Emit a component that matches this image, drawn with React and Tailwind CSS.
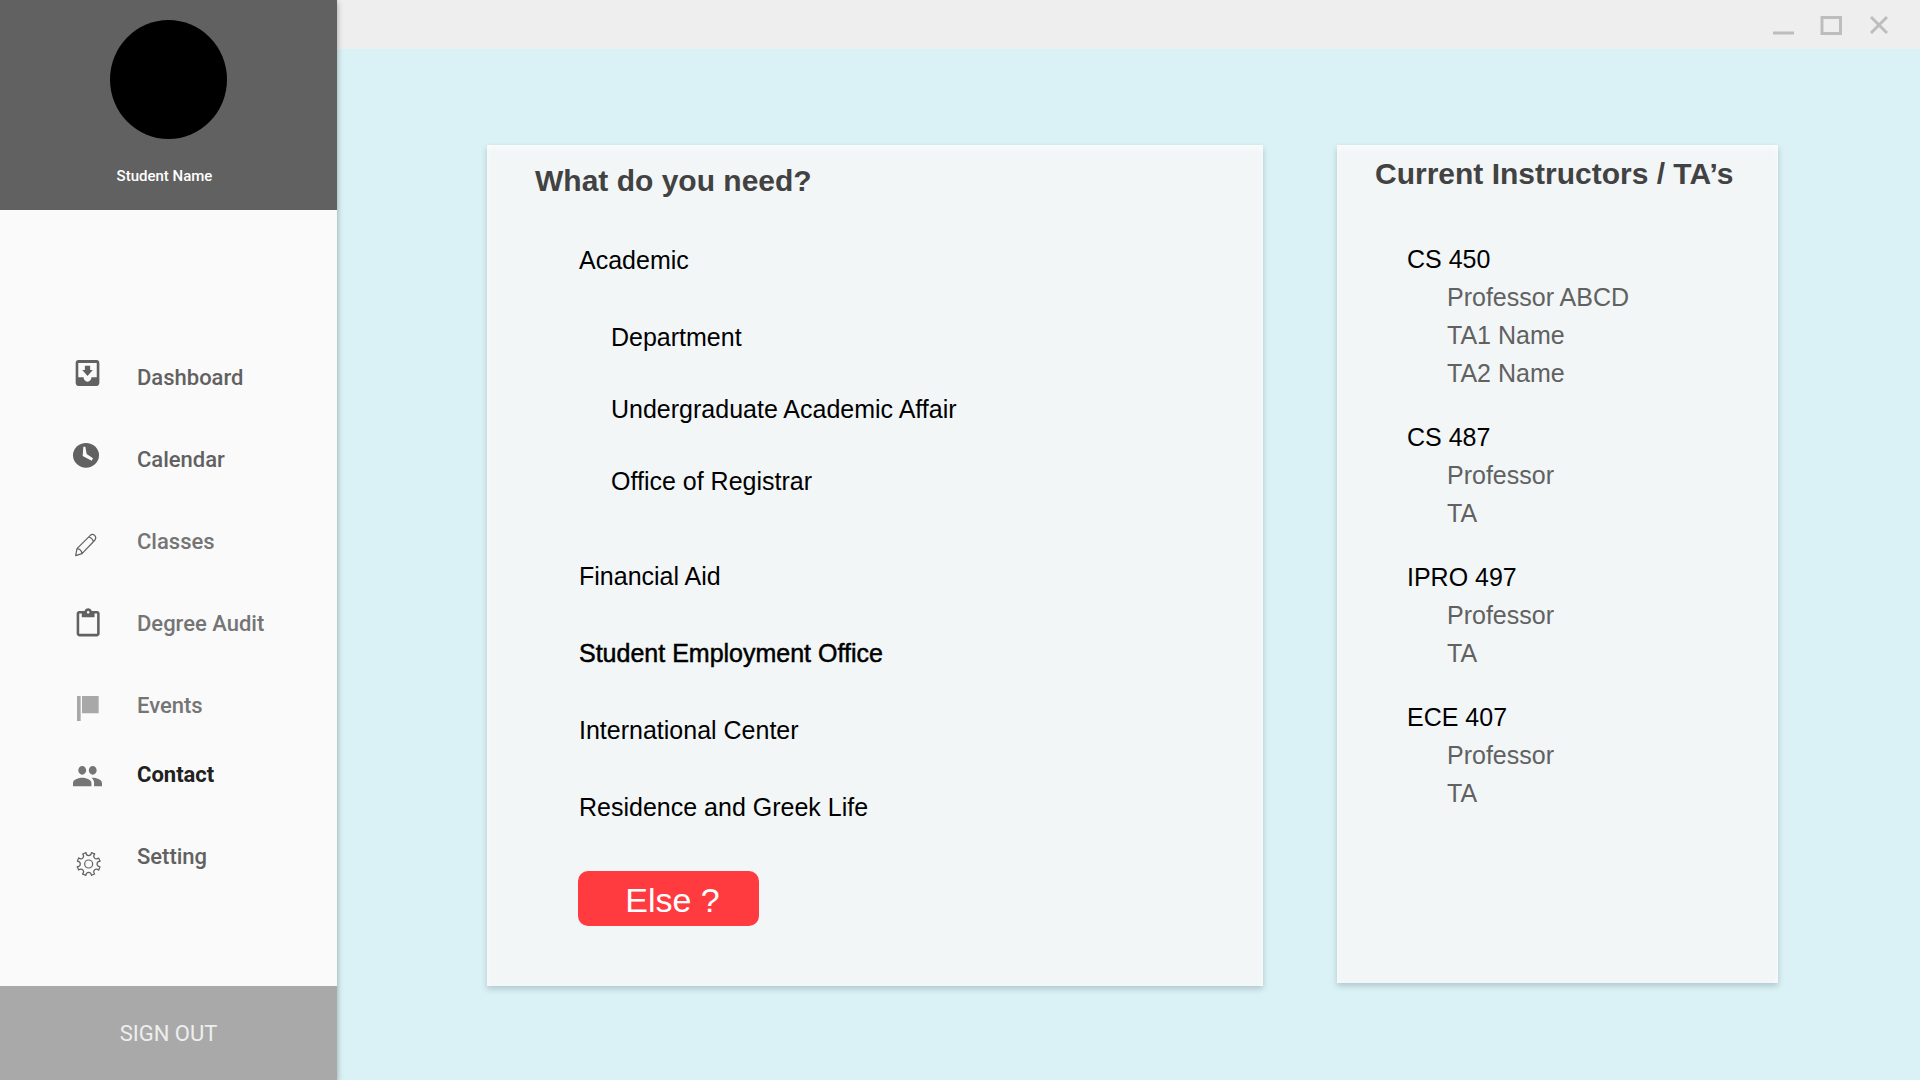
const ICON = "size-10 shrink-0";

function DashboardIcon() {
  return (
    <svg viewBox="0 0 120 120" className={ICON} fill="#616161" aria-hidden="true">
      <g transform="translate(35 9) scale(3.95 4.33) translate(-3 -3)">
        <path d="M19 3H4.99c-1.11 0-1.98.9-1.98 2L3 19c0 1.1.88 2 1.99 2H19c1.1 0 2-.9 2-2V5c0-1.1-.9-2-2-2zm0 12h-4c0 1.66-1.35 3-3 3s-3-1.34-3-3H4.99V5H19v10zm-3-5h-2V7h-4v3H8l4 4 4-4z" />
      </g>
    </svg>
  );
}

function CalendarIcon() {
  return (
    <svg viewBox="0 0 120 120" className={ICON} aria-hidden="true">
      <ellipse cx="66" cy="49" rx="39" ry="37" fill="#616161" />
      <path d="M58 23h6l4 22 19 13-4 7-27-14z" fill="#fafafa" />
    </svg>
  );
}

function PencilIcon() {
  return (
    <svg viewBox="0 0 120 120" className={ICON} fill="none" stroke="#616161" strokeWidth="3.6" strokeLinejoin="round" aria-hidden="true">
      <path d="M35 104l4-21 40-40c9-7 21 3 14 14l-39 41zM39 83c8 1 14 7 15 15M73 48c7 1 13 7 15 14" />
    </svg>
  );
}

function ClipboardIcon() {
  return (
    <svg viewBox="0 0 120 120" className={ICON} fill="#616161" aria-hidden="true">
      <g transform="translate(38 16) scale(3.83) translate(-3 0)">
        <path d="M19 2h-4.18C14.4.84 13.3 0 12 0c-1.3 0-2.4.84-2.82 2H5c-1.1 0-2 .9-2 2v16c0 1.1.9 2 2 2h14c1.1 0 2-.9 2-2V4c0-1.1-.9-2-2-2zm-7 0c.55 0 1 .45 1 1s-.45 1-1 1-1-.45-1-1 .45-1 1-1zm7 18H5V4h2v3h10V4h2v16z" />
      </g>
    </svg>
  );
}

function FlagIcon() {
  return (
    <svg viewBox="0 0 120 120" className={ICON} fill="#a8a8a8" aria-hidden="true">
      <path d="M39 33h11v75H39zM54 33h50v52H54z" />
    </svg>
  );
}

function PeopleIcon() {
  return (
    <svg viewBox="0 0 120 120" className={ICON} fill="#757575" aria-hidden="true">
      <g transform="translate(27 36) scale(3.95 4.36) translate(-1 -5)">
        <path d="M16 11c1.66 0 2.99-1.34 2.99-3S17.66 5 16 5c-1.66 0-3 1.34-3 3s1.34 3 3 3zm-8 0c1.66 0 2.99-1.34 2.99-3S9.66 5 8 5C6.34 5 5 6.34 5 8s1.34 3 3 3zm0 2c-2.33 0-7 1.17-7 3.5V19h14v-2.5c0-2.33-4.67-3.5-7-3.5zm8 0c-.29 0-.62.02-.97.05 1.16.84 1.97 1.97 1.97 3.45V19h6v-2.5c0-2.33-4.67-3.5-7-3.5z" />
      </g>
    </svg>
  );
}

function GearIcon() {
  const teeth = [0, 1, 2, 3, 4, 5, 6, 7];
  return (
    <svg viewBox="0 0 120 120" className={ICON} fill="none" stroke="#616161" strokeWidth="3.6" strokeLinejoin="round" strokeLinecap="round" aria-hidden="true">
      <g transform="translate(74 84)">
        <circle r="12" />
        {teeth.map((n) => (
          <path key={n} transform={`rotate(${n * 45})`} d="M-8.600-34c1 7 4 9 8.600 9s7.600-2 8.600-9L18-30" />
        ))}
      </g>
    </svg>
  );
}

const mainNav = [
  { label: "Dashboard", Icon: DashboardIcon, tone: "font-medium text-[#616161]" },
  { label: "Calendar", Icon: CalendarIcon, tone: "font-medium text-[#616161]" },
  { label: "Classes", Icon: PencilIcon, tone: "font-medium text-[#757575]" },
  { label: "Degree Audit", Icon: ClipboardIcon, tone: "font-medium text-[#757575]" },
  { label: "Events", Icon: FlagIcon, tone: "font-medium text-[#757575]" },
];

const userNav = [
  { label: "Contact", Icon: PeopleIcon, tone: "font-bold text-[#212121]", current: true },
  { label: "Setting", Icon: GearIcon, tone: "font-medium text-[#616161]" },
];

const courses = [
  { name: "CS 450", staff: ["Professor ABCD", "TA1 Name", "TA2 Name"] },
  { name: "CS 487", staff: ["Professor", "TA"] },
  { name: "IPRO 497", staff: ["Professor", "TA"] },
  { name: "ECE 407", staff: ["Professor", "TA"] },
];

function NavList({ items }) {
  return (
    <ul className="flex flex-col gap-[42px]">
      {items.map(({ label, Icon, tone, current }) => (
        <li key={label}>
          <a href="#" aria-current={current ? "page" : undefined} className="flex h-10 items-center gap-[33px]">
            <Icon />
            <span className={`pt-0.5 text-[22px] leading-7 ${tone}`}>{label}</span>
          </a>
        </li>
      ))}
    </ul>
  );
}

function Sidebar() {
  return (
    <aside className="z-10 flex w-[337px] shrink-0 flex-col bg-[#fafafa] font-[Roboto,sans-serif] shadow-[0_2px_6px_rgba(0,0,0,0.35)]">
      <header className="flex h-[210px] flex-col items-center bg-[#616161] pt-5">
        <div className="h-[119px] w-[117px] rounded-[50%] bg-black" />
        <p className="mt-[25px] pr-2 text-[15px] leading-6 font-medium text-white">Student Name</p>
      </header>
      <nav className="flex flex-1 flex-col gap-[29px] pt-[147px] pl-16">
        <NavList items={mainNav} />
        <NavList items={userNav} />
      </nav>
      <button className="h-[94px] bg-[#a9a9a9] text-[22px] text-[#eeeeee]">SIGN OUT</button>
    </aside>
  );
}

function TitleBar() {
  return (
    <header className="flex h-[49px] shrink-0 items-center justify-end gap-6 bg-[#eeeeee] pr-[29px] text-[#bdbdbd]">
      <button aria-label="Minimize">
        <svg viewBox="0 0 24 24" className="size-6" fill="currentColor"><path d="M2 18.500h21v3H2z" /></svg>
      </button>
      <button aria-label="Maximize">
        <svg viewBox="0 0 24 24" className="size-6" fill="none" stroke="currentColor" strokeWidth="3"><path d="M3 4.500h18.500v16H3z" /></svg>
      </button>
      <button aria-label="Close">
        <svg viewBox="0 0 24 24" className="size-6" fill="none" stroke="currentColor" strokeWidth="3"><path d="M4 4l16 16M20 4L4 20" /></svg>
      </button>
    </header>
  );
}

const CARD =
  "bg-[#f2f6f7] shadow-[0_3px_6px_rgba(0,40,50,0.2),inset_0_3px_6px_rgba(255,255,255,0.7)]";

function NeedsCard() {
  return (
    <section className={`min-w-0 grow-[776] basis-0 pt-[18px] pb-[60px] ${CARD}`}>
      <h2 className="ml-12 text-[30px] leading-9 font-bold text-[#424242]">What do you need?</h2>
      <ul className="mt-[45px] ml-[92px] flex flex-col gap-[45px] text-[25px] leading-8 text-black">
        <li>
          <a href="#">Academic</a>
          <ul className="mt-[45px] mb-[18px] ml-8 flex flex-col gap-10">
            <li><a href="#">Department</a></li>
            <li><a href="#">Undergraduate Academic Affair</a></li>
            <li><a href="#">Office of Registrar</a></li>
          </ul>
        </li>
        <li><a href="#">Financial Aid</a></li>
        <li><a href="#" className="[-webkit-text-stroke:0.5px_black]">Student Employment Office</a></li>
        <li><a href="#">International Center</a></li>
        <li><a href="#">Residence and Greek Life</a></li>
      </ul>
      <button className="mt-12 ml-[91px] h-[55px] w-[181px] rounded-[10px] bg-[#ff3b3f] pt-0.5 pl-2 text-[34px] leading-10 text-white">
        Else ?
      </button>
    </section>
  );
}

function InstructorsCard() {
  return (
    <section className={`min-w-0 grow-[441] basis-0 pt-[11px] pb-[171px] ${CARD}`}>
      <h2 className="ml-[38px] text-[30px] leading-9 font-bold whitespace-nowrap text-[#424242]">Current Instructors / TA’s</h2>
      <div className="mt-12 ml-[70px] flex flex-col gap-[26px] text-[25px] leading-[38px]">
        {courses.map(({ name, staff }) => (
          <section key={name}>
            <h3 className="text-black">{name}</h3>
            <ul className="ml-10 text-[#616161]">
              {staff.map((person) => (
                <li key={person}>{person}</li>
              ))}
            </ul>
          </section>
        ))}
      </div>
    </section>
  );
}

export default function App() {
  return (
    <div className="flex min-h-screen bg-[#daf1f5]">
      <Sidebar />
      <div className="flex min-w-0 flex-1 flex-col">
        <TitleBar />
        <main className="flex items-start gap-[74px] pt-24 pr-[142px] pl-[150px] font-['Liberation_Sans',Arial,sans-serif]">
          <NeedsCard />
          <InstructorsCard />
        </main>
      </div>
    </div>
  );
}
